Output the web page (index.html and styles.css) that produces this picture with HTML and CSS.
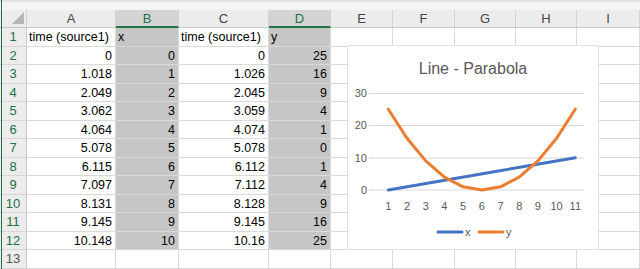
FILE: index.html
```html
<!DOCTYPE html>
<html lang="en">
<head>
    <meta charset="UTF-8">
    <title>Line - Parabola</title>
    <link rel="stylesheet" href="styles.css">
</head>
<body>
<div class="sheet">
    <div class="bar"></div>

    <div class="hd corner"><span class="tri"></span></div>
    <div class="hd">A</div><div class="hd on">B</div><div class="hd">C</div><div class="hd on">D</div>
    <div class="hd">E</div><div class="hd">F</div><div class="hd">G</div><div class="hd">H</div><div class="hd">I</div>

    <div class="rh">1</div>
    <div class="c">time (source1)</div><div class="c sel">x</div><div class="c">time (source1)</div><div class="c sel">y</div>
    <div class="c"></div><div class="c"></div><div class="c"></div><div class="c"></div><div class="c"></div>

    <div class="rh">2</div>
    <div class="c num">0</div><div class="c num sel">0</div><div class="c num">0</div><div class="c num sel">25</div>
    <div class="c"></div><div class="c"></div><div class="c"></div><div class="c"></div><div class="c"></div>

    <div class="rh">3</div>
    <div class="c num">1.018</div><div class="c num sel">1</div><div class="c num">1.026</div><div class="c num sel">16</div>
    <div class="c"></div><div class="c"></div><div class="c"></div><div class="c"></div><div class="c"></div>

    <div class="rh">4</div>
    <div class="c num">2.049</div><div class="c num sel">2</div><div class="c num">2.045</div><div class="c num sel">9</div>
    <div class="c"></div><div class="c"></div><div class="c"></div><div class="c"></div><div class="c"></div>

    <div class="rh">5</div>
    <div class="c num">3.062</div><div class="c num sel">3</div><div class="c num">3.059</div><div class="c num sel">4</div>
    <div class="c"></div><div class="c"></div><div class="c"></div><div class="c"></div><div class="c"></div>

    <div class="rh">6</div>
    <div class="c num">4.064</div><div class="c num sel">4</div><div class="c num">4.074</div><div class="c num sel">1</div>
    <div class="c"></div><div class="c"></div><div class="c"></div><div class="c"></div><div class="c"></div>

    <div class="rh">7</div>
    <div class="c num">5.078</div><div class="c num sel">5</div><div class="c num">5.078</div><div class="c num sel">0</div>
    <div class="c"></div><div class="c"></div><div class="c"></div><div class="c"></div><div class="c"></div>

    <div class="rh">8</div>
    <div class="c num">6.115</div><div class="c num sel">6</div><div class="c num">6.112</div><div class="c num sel">1</div>
    <div class="c"></div><div class="c"></div><div class="c"></div><div class="c"></div><div class="c"></div>

    <div class="rh">9</div>
    <div class="c num">7.097</div><div class="c num sel">7</div><div class="c num">7.112</div><div class="c num sel">4</div>
    <div class="c"></div><div class="c"></div><div class="c"></div><div class="c"></div><div class="c"></div>

    <div class="rh">10</div>
    <div class="c num">8.131</div><div class="c num sel">8</div><div class="c num">8.128</div><div class="c num sel">9</div>
    <div class="c"></div><div class="c"></div><div class="c"></div><div class="c"></div><div class="c"></div>

    <div class="rh">11</div>
    <div class="c num">9.145</div><div class="c num sel">9</div><div class="c num">9.145</div><div class="c num sel">16</div>
    <div class="c"></div><div class="c"></div><div class="c"></div><div class="c"></div><div class="c"></div>

    <div class="rh">12</div>
    <div class="c num">10.148</div><div class="c num sel">10</div><div class="c num">10.16</div><div class="c num sel">25</div>
    <div class="c"></div><div class="c"></div><div class="c"></div><div class="c"></div><div class="c"></div>

    <div class="rh off">13</div>
    <div class="c"></div><div class="c"></div><div class="c"></div><div class="c"></div>
    <div class="c"></div><div class="c"></div><div class="c"></div><div class="c"></div><div class="c"></div>

    <!-- chart floats over E2:I12 -->
    <div class="chart">
        <svg width="250" height="203" viewBox="0 0 250 203">
            <text class="title" x="125" y="28" text-anchor="middle">Line - Parabola</text>

            <g class="grid">
                <line x1="21" y1="47.5" x2="236" y2="47.5"/>
                <line x1="21" y1="79.5" x2="236" y2="79.5"/>
                <line x1="21" y1="112" x2="236" y2="112"/>
                <line x1="21" y1="144" x2="236" y2="144"/>
            </g>

            <g class="axis" text-anchor="end">
                <text x="19" y="51">30</text>
                <text x="19" y="83">20</text>
                <text x="19" y="116">10</text>
                <text x="19" y="148">0</text>
            </g>

            <g class="axis" text-anchor="middle">
                <text x="40.3" y="164">1</text>
                <text x="59" y="164">2</text>
                <text x="77.7" y="164">3</text>
                <text x="96.4" y="164">4</text>
                <text x="115.1" y="164">5</text>
                <text x="133.8" y="164">6</text>
                <text x="152.5" y="164">7</text>
                <text x="171.2" y="164">8</text>
                <text x="189.9" y="164">9</text>
                <text x="208.6" y="164">10</text>
                <text x="227.3" y="164">11</text>
            </g>

            <polyline class="ln blue" points="40.3,144 227.3,111.7"/>
            <polyline class="ln orange" points="40.3,63.2 59,92.3 77.7,114.9 96.4,131.1 115.1,140.8 133.8,144 152.5,140.8 171.2,131.1 189.9,114.9 208.6,92.3 227.3,63.2"/>

            <line class="ln blue" x1="90" y1="186" x2="114" y2="186"/>
            <text class="axis" x="117" y="190">x</text>
            <line class="ln orange" x1="131" y1="186" x2="155" y2="186"/>
            <text class="axis" x="158" y="190">y</text>
        </svg>
    </div>
</div>
</body>
</html>
```

FILE: styles.css
```css
body {
    margin: 0;
    background: #fff;
    font-family: "Liberation Sans", Arial, sans-serif;
    font-size: 12.5px;
    color: #000;
    overflow: hidden;
}
.sheet {
    position: relative;
    display: grid;
    grid-template-columns: 27px 89px 63px 90px 62px 62px 62px 61px 61px 63px;
    grid-template-rows: 10px 18px repeat(13, 18.5px);
    width: 640px;
    height: 269px;
}
/* window edge */
.sheet::after {
    content: "";
    position: absolute;
    left: 1px;
    top: 0;
    bottom: 0;
    width: 1px;
    background: #217346;
}
.bar {
    grid-column: 1 / -1;
    background: #f4f4f4;
    border-top: 2px solid #e2e2e2;
}
.hd {
    background: #ececec;
    border-right: 1px solid #d2d2d2;
    border-bottom: 1px solid #c9c9c9;
    text-align: center;
    color: #444;
    font-size: 13px;
    line-height: 17px;
    box-sizing: border-box;
}
.hd.on {
    background: #d3d3d3;
    color: #217346;
    border-bottom: 2px solid #217346;
}
.corner {
    display: flex;
    justify-content: flex-end;
    align-items: flex-end;
    padding: 0 2px 3px 0;
}
.tri {
    width: 0;
    height: 0;
    border-left: 12px solid transparent;
    border-bottom: 12px solid #b7b7b7;
}
.rh {
    background: #ececec;
    border-right: 1px solid #c9c9c9;
    border-bottom: 1px solid #d6d6d6;
    text-align: center;
    color: #217346;
    font-size: 13px;
    line-height: 18px;
    box-sizing: border-box;
}
.rh.off {
    color: #555;
}
.c {
    border-right: 1px solid #dadada;
    border-bottom: 1px solid #dadada;
    padding: 0 3px 0 2px;
    line-height: 18px;
    white-space: nowrap;
    overflow: hidden;
    box-sizing: border-box;
}
.num {
    text-align: right;
}
.sel {
    background: #c6c6c6;
    border-color: #d8d8d8;
}
.chart {
    position: absolute;
    left: 348px;
    top: 46px;
    width: 250px;
    height: 203px;
    background: #fff;
    box-shadow: 0 0 0 1px #e2e2e2;
}
.chart svg {
    display: block;
    font-family: "Liberation Sans", Arial, sans-serif;
}
.title {
    font-size: 16px;
    fill: #595959;
}
.axis {
    font-size: 11px;
    fill: #595959;
}
.grid line {
    stroke: #d9d9d9;
    stroke-width: 1;
}
.ln {
    fill: none;
    stroke-width: 3;
    stroke-linecap: round;
    stroke-linejoin: round;
}
.blue {
    stroke: #4472c4;
}
.orange {
    stroke: #ed7d31;
}
```
